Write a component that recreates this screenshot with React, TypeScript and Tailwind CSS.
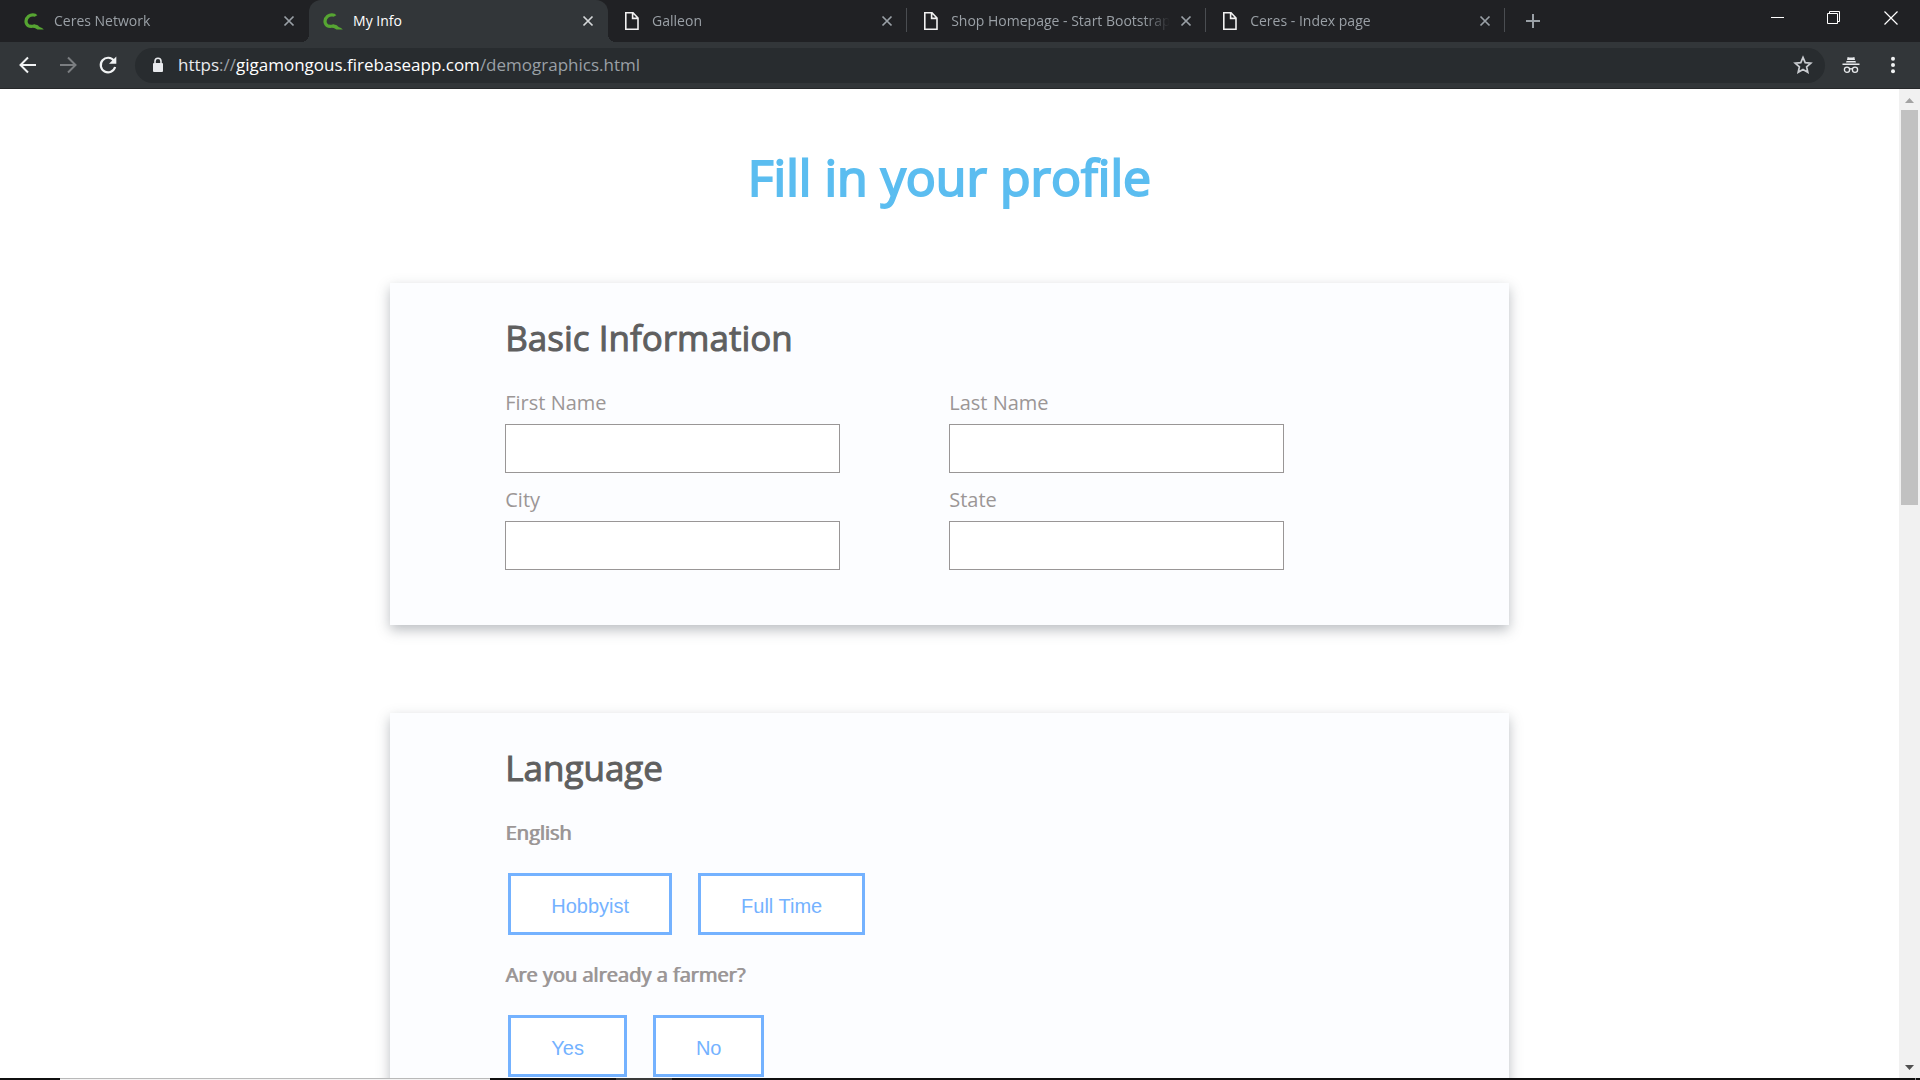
import React from "react";

type Tab = { title: string; icon: "ceres" | "file"; active?: boolean };

const tabs: Tab[] = [
  { title: "Ceres Network", icon: "ceres" },
  { title: "My Info", icon: "ceres", active: true },
  { title: "Galleon", icon: "file" },
  { title: "Shop Homepage - Start Bootstrap", icon: "file" },
  { title: "Ceres - Index page", icon: "file" },
];

function CeresIcon() {
  return (
    <svg className="h-5 w-5 shrink-0" viewBox="0 0 20 20" fill="none" aria-hidden="true">
      <path d="M12 5C11 3.4 7 3.4 4.6 5.2C1.2 8 1.2 12.4 4.2 14.6C6.6 16.2 9 14.8 11 15.2" stroke="#56a532" strokeWidth="3.2" strokeLinejoin="round" />
      <path d="M9.5 13.6C12 13.2 13.6 14 15 15.4C16.4 16.4 18.6 16.8 19.8 18.6H13.4C12.4 17.8 11.2 17 9.5 16.8Z" fill="#56a532" />
    </svg>
  );
}

function FileIcon() {
  return (
    <svg className="h-5 w-5 shrink-0" viewBox="0 0 20 20" fill="none" stroke="#f1f1f1" strokeWidth="1.6" aria-hidden="true">
      <path d="M3.8 1.8H11L16 7V18.2H3.8Z M10.6 2V7.4H16" />
    </svg>
  );
}

function TabItem({ tab, divider }: { tab: Tab; divider: boolean }) {
  return (
    <div className={tab.active ? "relative flex h-full min-w-0 flex-1 items-center rounded-t-xl bg-[#323639] pr-3 pl-3.5" : "relative flex h-full min-w-0 flex-1 items-center pr-3 pl-3.5"}>
      {tab.active && (
        <>
          <span className="absolute bottom-0 -left-2 h-2 w-2 bg-[radial-gradient(circle_at_0_0,#202124_8px,#323639_8px)]" />
          <span className="absolute -right-2 bottom-0 h-2 w-2 bg-[radial-gradient(circle_at_100%_0,#202124_8px,#323639_8px)]" />
        </>
      )}
      <button className="mr-1 flex h-full min-w-0 flex-1 items-center gap-2.5 text-left">
        {tab.icon === "ceres" ? <CeresIcon /> : <FileIcon />}
        <span className={tab.active ? "min-w-0 flex-1 overflow-hidden whitespace-nowrap text-white" : "min-w-0 flex-1 overflow-hidden whitespace-nowrap text-[#9aa0a6] [mask-image:linear-gradient(to_right,black_88%,transparent)]"}>
          {tab.title}
        </span>
      </button>
      <button className="flex h-5 w-5 items-center justify-center pl-1" aria-label={"Close " + tab.title}>
        <svg className="h-3 w-3" viewBox="0 0 12 12" stroke={tab.active ? "#d5d7d9" : "#9aa0a6"} strokeWidth="1.7" aria-hidden="true">
          <path d="M1.5 1.5L10.5 10.5M10.5 1.5L1.5 10.5" />
        </svg>
      </button>
      {divider && <span className="absolute top-2 right-0 h-6 w-px bg-[#4a4d51]" />}
    </div>
  );
}

function BrowserChrome() {
  return (
    <header className="shrink-0 font-['Open_Sans',sans-serif]">
      <div className="flex h-[42px] bg-[#202124] text-sm">
        <div className="flex w-[78.4%] pl-2.5">
          {tabs.map((t, i) => (
            <TabItem key={t.title} tab={t} divider={i > 1} />
          ))}
        </div>
        <button className="ml-4 flex w-6 items-center justify-center" aria-label="New tab">
          <svg className="h-4 w-4" viewBox="0 0 16 16" stroke="#9aa0a6" strokeWidth="2" aria-hidden="true">
            <path d="M8 1V15M1 8H15" />
          </svg>
        </button>
        <div className="mr-px ml-auto flex h-9">
          <button className="flex w-[57px] items-center justify-center" aria-label="Minimize">
            <svg className="h-3.5 w-3.5" viewBox="0 0 14 14" stroke="#fff" aria-hidden="true"><path d="M1 6.5H14" /></svg>
          </button>
          <button className="flex w-[57px] items-center justify-center" aria-label="Restore">
            <svg className="h-3.5 w-3.5" viewBox="0 0 14 14" stroke="#fff" fill="none" aria-hidden="true"><path d="M.5 2.5H10.5V12.5H.5ZM2.5 2.5V.5H12.5V10.5H10.5" /></svg>
          </button>
          <button className="flex w-[57px] items-center justify-center" aria-label="Close window">
            <svg className="h-3.5 w-3.5" viewBox="0 0 14 14" stroke="#fff" strokeWidth="1.2" aria-hidden="true"><path d="M.5 .5L13.5 13.5M13.5 .5L.5 13.5" /></svg>
          </button>
        </div>
      </div>
      <div className="flex h-[47px] items-center border-b border-[#26282a] bg-[#323639] pt-px pr-3 pb-px pl-2">
        <button className="flex w-10 justify-center" aria-label="Back">
          <svg className="h-5 w-5" viewBox="0 0 20 20" stroke="#f1f3f4" strokeWidth="2" fill="none" aria-hidden="true"><path d="M18 10H3M10 2.5L2.5 10L10 17.5" /></svg>
        </button>
        <button className="flex w-10 justify-center" aria-label="Forward">
          <svg className="h-5 w-5" viewBox="0 0 20 20" stroke="#7b7e81" strokeWidth="2" fill="none" aria-hidden="true"><path d="M2 10H17M10 2.5L17.5 10L10 17.5" /></svg>
        </button>
        <button className="flex w-10 justify-center" aria-label="Reload">
          <svg className="h-5 w-5" viewBox="0 0 20 20" fill="none" aria-hidden="true">
            <path d="M16 5.8A7.3 7.3 0 1 0 17.1 12" stroke="#f1f3f4" strokeWidth="2.2" />
            <path d="M18.3 1.5V8.8H11Z" fill="#f1f3f4" />
          </svg>
        </button>
        <div className="ml-[7px] flex h-[35px] min-w-0 flex-1 items-center rounded-full bg-[#282c2f] pr-3 pl-[15px]">
          <svg className="h-4 w-4 shrink-0" viewBox="0 0 16 16" fill="none" aria-hidden="true">
            <rect x="3" y="6" width="10" height="9" rx="1" fill="#e8eaed" />
            <path d="M5 7V4.2a3 3 0 0 1 6 0V7" stroke="#e8eaed" strokeWidth="1.6" />
          </svg>
          <a href="#profile" className="ml-3 flex-1 truncate text-[17px] text-[#9aa0a6]">
            <span className="text-[#e8eaed]">https</span>://<span className="text-white">gigamongous.firebaseapp.com</span>/demographics.html
          </a>
          <button aria-label="Bookmark">
            <svg className="h-5 w-5" viewBox="0 0 20 20" fill="none" stroke="#c9ccd0" strokeWidth="1.7" aria-hidden="true">
              <path d="M10 2.4L12.2 7.6L17.8 8.1L13.6 11.8L14.8 17.3L10 14.4L5.2 17.3L6.4 11.8L2.2 8.1L7.8 7.6Z" />
            </svg>
          </button>
        </div>
        <button className="flex w-[52px] justify-center" aria-label="Incognito">
          <svg className="h-[18px] w-[18px]" viewBox="0 0 18 18" fill="none" aria-hidden="true">
            <path d="M5.6 1L7.4 1.6H10.6L12.4 1L13 4H5ZM4.5 5H13.5L14 6.6H4ZM.5 7.6H17.5V9H.5Z" fill="#e8eaed" />
            <circle cx="5" cy="13.7" r="2.6" stroke="#e8eaed" strokeWidth="1.3" />
            <circle cx="13" cy="13.7" r="2.6" stroke="#e8eaed" strokeWidth="1.3" />
            <path d="M7.6 13.2Q9 12.2 10.4 13.2" stroke="#e8eaed" strokeWidth="1.2" />
          </svg>
        </button>
        <button className="flex w-[31px] justify-center" aria-label="Menu">
          <svg className="h-[18px] w-[18px]" viewBox="0 0 18 18" fill="#f1f3f4" aria-hidden="true">
            <circle cx="9" cy="2.8" r="2" /><circle cx="9" cy="9" r="2" /><circle cx="9" cy="15.2" r="2" />
          </svg>
        </button>
      </div>
    </header>
  );
}

function Card({ title, children }: { title: string; children: React.ReactNode }) {
  return (
    <section className="mx-auto mb-22 w-[58.9%] bg-[#fcfdff] px-[115px] pt-[31px] pb-[55px] shadow-[0_5px_12px_rgba(60,70,80,0.35)]">
      <h2 className="mb-[27px] text-[35px] leading-[48px] text-[#5f5f5f] [-webkit-text-stroke:1px_#5f5f5f]">{title}</h2>
      {children}
    </section>
  );
}

function Field({ id, label }: { id: string; label: string }) {
  return (
    <div className="flex flex-col">
      <label htmlFor={id} className="mb-[7px] text-xl leading-7 text-[#9b9696]">{label}</label>
      <input id={id} type="text" className="h-[49px] border border-[#999696] bg-white px-3 text-xl outline-none" />
    </div>
  );
}

function Choices({ question, options }: { question: string; options: string[] }) {
  return (
    <fieldset className="mb-[26px]">
      <legend className="mb-[26px] text-xl leading-7 text-[#9b9696] [text-shadow:1px_0_0_#9b9696]">{question}</legend>
      <div className="flex gap-[26px] pl-[3px]">
        {options.map((o) => (
          <button key={o} type="button" className="h-[62px] border-3 border-[#74b2ff] bg-white px-10 pt-1 font-['Liberation_Sans',Arial,sans-serif] text-xl text-[#74b2ff]">
            {o}
          </button>
        ))}
      </div>
    </fieldset>
  );
}

export default function App() {
  return (
    <div className="flex h-screen flex-col overflow-hidden bg-white">
      <BrowserChrome />
      <div className="flex min-h-0 flex-1">
        <main id="profile" className="min-w-0 flex-1 overflow-hidden font-['Open_Sans',sans-serif]">
          <h1 className="pt-[52px] pb-[70px] text-center text-[50px] leading-[72px] text-[#5bbdf0] [font-variant-ligatures:none] [-webkit-text-stroke:2px_#5bbdf0]">Fill in your profile</h1>
          <form>
            <Card title="Basic Information">
              <div className="grid grid-cols-[335px_335px] gap-x-[109px] gap-y-[13px]">
                <Field id="first-name" label="First Name" />
                <Field id="last-name" label="Last Name" />
                <Field id="city" label="City" />
                <Field id="state" label="State" />
              </div>
            </Card>
            <Card title="Language">
              <Choices question="English" options={["Hobbyist", "Full Time"]} />
              <Choices question="Are you already a farmer?" options={["Yes", "No"]} />
            </Card>
          </form>
        </main>
        <div className="flex w-[21px] shrink-0 flex-col items-center bg-[#f1f1f1]">
          <svg className="h-[21px] w-[21px]" viewBox="0 0 21 21" fill="#a3a3a3" aria-hidden="true"><path d="M10.5 9L15 14H6Z" /></svg>
          <div className="h-[395px] w-[17px] bg-[#c1c1c1]" />
          <svg className="mt-auto h-[21px] w-[21px]" viewBox="0 0 21 21" fill="#505050" aria-hidden="true"><path d="M10.5 13L15 8H6Z" /></svg>
        </div>
      </div>
      <footer className="flex h-0.5 shrink-0 bg-[#101010]">
        <span className="ml-[60px] w-[430px] border-t border-[#b9b9b9] bg-[#f3f3f3]" />
        <span className="ml-[126px] w-14 bg-[#3a3a3a]" />
        <span className="mr-1 ml-auto w-px bg-[#8a8a8a]" />
      </footer>
    </div>
  );
}
